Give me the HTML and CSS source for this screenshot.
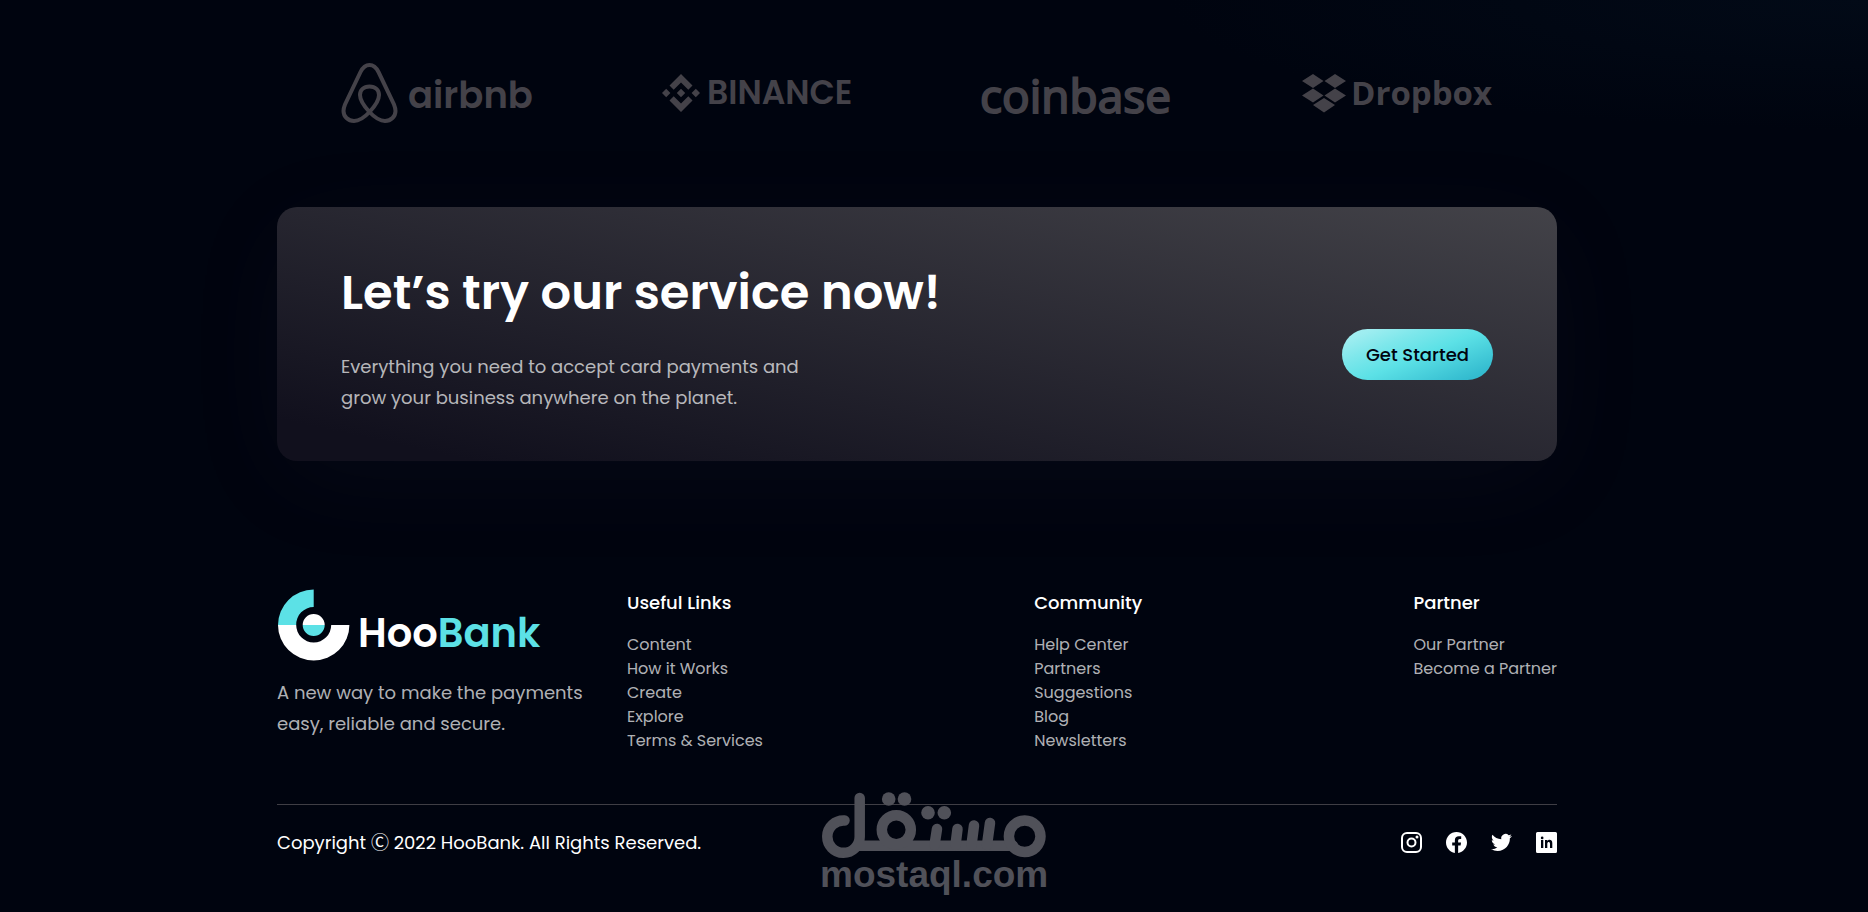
FILE: index.html
```html
<!DOCTYPE html>
<html lang="en">
<head>
<meta charset="utf-8">
<title>HooBank</title>
<meta name="viewport" content="width=device-width, initial-scale=1">
<link rel="stylesheet" href="styles.css">
</head>
<body>
<div class="page">
  <main class="container">
    <section class="clients" aria-label="Clients">
      <div class="client">
        <svg class="client-logo" viewBox="0 0 192 64" role="img" aria-label="airbnb">
          <path d="M28.500 51C21 43 19 38 19 34C19 29 22.500 25.500 28.500 25.500C34.500 25.500 38 29 38 34C38 38 36 43 28.500 51C22 58 17.500 60 13 60C7 60 2.500 55.500 2.500 50C2.500 47.500 3 46 4 43.500L19.500 11C21.500 7 24 4 28.500 4C33 4 35.500 7 37.500 11L53 43.500C54 46 54.500 47.500 54.500 50C54.500 55.500 50 60 44 60C39.500 60 35 58 28.500 51Z" fill="none" stroke="#444249" stroke-width="4"/>
          <text class="word-airbnb" x="67" y="47">airbnb</text>
        </svg>
      </div>
      <div class="client">
        <svg class="client-logo" viewBox="0 0 192 64" role="img" aria-label="BINANCE">
          <path class="mark" d="M20 13L31.500 24.500L27.300 28.800L20 21.500L12.700 28.800L8.500 24.500ZM20 51L31.500 39.500L27.300 35.200L20 42.500L12.700 35.200L8.500 39.500ZM1 32L5.200 27.800L9.400 32L5.200 36.200ZM30.600 32L34.800 27.800L39 32L34.800 36.200ZM20 27.800L24.200 32L20 36.200L15.800 32Z"/>
          <text class="word-binance" x="46" y="43">BINANCE</text>
        </svg>
      </div>
      <div class="client">
        <svg class="client-logo" viewBox="0 0 192 64" role="img" aria-label="coinbase">
          <text class="word-coinbase" x="-1" y="52">coinbase</text>
        </svg>
      </div>
      <div class="client">
        <svg class="client-logo" viewBox="0 0 192 64" role="img" aria-label="Dropbox">
          <path class="mark" d="M12 13L22.500 20L12 27L1 20ZM34 13L45 20L34 27L23.500 20ZM12 27.500L22.500 34.500L12 41.500L1 34.500ZM34 27.500L45 34.500L34 41.500L23.500 34.500ZM23 37L34 44L23 51.500L12 44Z"/>
          <text class="word-dropbox" x="50" y="44">Dropbox</text>
        </svg>
      </div>
    </section>

    <section class="cta">
      <div class="cta-copy">
        <h2 class="cta-title">Let’s try our service now!</h2>
        <p class="lead">Everything you need to accept card payments and grow your business anywhere on the planet.</p>
      </div>
      <button type="button" class="cta-button">Get Started</button>
    </section>

    <footer class="footer">
      <div class="footer-top">
        <div class="brand">
          <svg class="brand-logo" viewBox="0 0 266 72" role="img" aria-label="HooBank">
            <path fill="#5ce1e6" d="M1 36A35.700 35.500 0 0 1 36.700 0.500V18A17.500 17.500 0 0 0 19.200 36ZM25.700 36H47.700A11 11 0 0 1 25.700 36Z"/>
            <path fill="#fff" d="M1 36H19.200A17.500 17.500 0 0 0 54.200 36H72.400A35.700 35.500 0 0 1 1 36ZM25.700 36A11 11 0 0 1 47.700 36Z"/>
            <text class="word-brand" x="81" y="58">Hoo<tspan fill="#5ce1e6">Bank</tspan></text>
          </svg>
          <p class="lead">A new way to make the payments easy, reliable and secure.</p>
        </div>
        <nav class="link-columns" aria-label="Footer">
          <div class="link-column">
            <h3 class="link-title">Useful Links</h3>
            <ul class="links">
              <li><a href="#">Content</a></li>
              <li><a href="#">How it Works</a></li>
              <li><a href="#">Create</a></li>
              <li><a href="#">Explore</a></li>
              <li><a href="#">Terms &amp; Services</a></li>
            </ul>
          </div>
          <div class="link-column">
            <h3 class="link-title">Community</h3>
            <ul class="links">
              <li><a href="#">Help Center</a></li>
              <li><a href="#">Partners</a></li>
              <li><a href="#">Suggestions</a></li>
              <li><a href="#">Blog</a></li>
              <li><a href="#">Newsletters</a></li>
            </ul>
          </div>
          <div class="link-column">
            <h3 class="link-title">Partner</h3>
            <ul class="links">
              <li><a href="#">Our Partner</a></li>
              <li><a href="#">Become a Partner</a></li>
            </ul>
          </div>
        </nav>
      </div>
      <div class="footer-bottom">
        <p class="copyright">Copyright Ⓒ 2022 HooBank. All Rights Reserved.</p>
        <div class="socials">
          <a href="#" aria-label="Instagram"><svg class="social" viewBox="0 0 21 21"><rect x="1" y="1" width="19" height="19" rx="5" fill="none" stroke="#fff" stroke-width="2"/><circle cx="10.500" cy="10.500" r="4" fill="none" stroke="#fff" stroke-width="2"/><circle cx="16" cy="5" r="1.500" fill="#fff"/></svg></a>
          <a href="#" aria-label="Facebook"><svg class="social" viewBox="0 0 24 24"><path fill="#fff" d="M24 12.073c0-6.627-5.373-12-12-12s-12 5.373-12 12c0 5.990 4.388 10.954 10.125 11.854v-8.385H7.078v-3.470h3.047V9.430c0-3.007 1.792-4.669 4.533-4.669 1.312 0 2.686.235 2.686.235v2.953H15.830c-1.491 0-1.956.925-1.956 1.874v2.250h3.328l-.532 3.470h-2.796v8.385C19.612 23.027 24 18.062 24 12.073z"/></svg></a>
          <a href="#" aria-label="Twitter"><svg class="social" viewBox="0 0 24 24"><path fill="#fff" d="M23.953 4.570a10 10 0 01-2.825.775 4.958 4.958 0 002.163-2.723c-.951.555-2.005.959-3.127 1.184a4.920 4.920 0 00-8.384 4.482C7.690 8.095 4.067 6.130 1.640 3.162a4.822 4.822 0 00-.666 2.475c0 1.710.870 3.213 2.188 4.096a4.904 4.904 0 01-2.228-.616v.060a4.923 4.923 0 003.946 4.827 4.996 4.996 0 01-2.212.085 4.936 4.936 0 004.604 3.417 9.867 9.867 0 01-6.102 2.105c-.390 0-.779-.023-1.170-.067a13.995 13.995 0 007.557 2.209c9.053 0 13.998-7.496 13.998-13.985 0-.210 0-.420-.015-.630A9.935 9.935 0 0024 4.590z"/></svg></a>
          <a href="#" aria-label="LinkedIn"><svg class="social" viewBox="0 0 21 21"><path fill="#fff" fill-rule="evenodd" d="M1.500 0H19.500A1.500 1.500 0 0 1 21 1.500V19.500A1.500 1.500 0 0 1 19.500 21H1.500A1.500 1.500 0 0 1 0 19.500V1.500A1.500 1.500 0 0 1 1.500 0ZM5 8V16H7.300V8ZM6.150 4.600A1.350 1.350 0 1 0 6.150 7.300A1.350 1.350 0 1 0 6.150 4.600ZM9 8V16H11.300V11.800C11.300 9.300 14 9.300 14 11.800V16H16.300V11C16.300 7.300 12.700 7 11.300 9V8Z"/></svg></a>
        </div>
      </div>
    </footer>
  </main>
  <svg class="watermark" viewBox="0 0 226 104" role="img" aria-label="mostaql.com">
    <g fill="none" stroke="#505159" stroke-width="10.500" stroke-linecap="round" stroke-linejoin="round">
      <path d="M23.500 28.500A16.200 16.200 0 1 0 38.700 44.500V6M36 53.700H192"/>
      <circle cx="75.300" cy="37.700" r="14.500"/>
      <circle cx="203.700" cy="44.300" r="15.800"/>
      <path d="M116 37L113.500 53M136.500 37L134.500 53M153 33.500L150.500 53M169 31L166 53"/>
    </g>
    <g fill="#505159">
      <circle cx="67.700" cy="7" r="6.800"/><circle cx="83.500" cy="7" r="6.800"/>
      <circle cx="107" cy="20.700" r="6.800"/><circle cx="123.300" cy="20.700" r="6.800"/>
      <text class="word-watermark" x="-1" y="95">mostaql.com</text>
    </g>
  </svg>
</div>
</body>
</html>
```
FILE: styles.css
```css
* {
  box-sizing: border-box;
  margin: 0;
  padding: 0;
}

body {
  background: #00040f;
  color: #fff;
  font-family: Poppins, "Noto Sans CJK JP", sans-serif;
}

.page {
  position: relative;
  min-height: 100vh;
  padding: 0 34px 0 0;
  background: radial-gradient(ellipse 700px 130px at 100% 0, #020a17, #00040f);
  overflow: hidden;
}

.container {
  max-width: 1280px;
  margin: 0 auto;
}

.clients {
  display: grid;
  grid-template-columns: repeat(4, 1fr);
  padding: 61px 0 82px;
}

.client {
  display: flex;
  justify-content: center;
}

.client-logo {
  width: 192px;
  height: 64px;
  overflow: visible;
}

.client-logo text,
.mark {
  fill: #444249;
}

.word-airbnb {
  font: 600 37px Poppins, sans-serif;
}

.word-binance {
  font: 600 33px Poppins, sans-serif;
}

.word-coinbase {
  font: 500 46px "Open Sans", sans-serif;
  stroke: #444249;
  stroke-width: 2px;
}

.word-dropbox {
  font: 700 33px "Open Sans", sans-serif;
}

.cta {
  display: flex;
  align-items: center;
  padding: 48px 64px;
  border-radius: 20px;
  background: linear-gradient(-168deg, #fff -279%, #6d6d6d -78%, #11101d 92%);
  box-shadow: 0 20px 100px -10px rgba(66, 71, 91, 0.1);
}

.cta-copy {
  flex: 1;
}

.cta-title {
  font-size: 48px;
  font-weight: 600;
  line-height: 76px;
}

.lead {
  max-width: 480px;
  margin-top: 20px;
  color: rgba(255, 255, 255, 0.7);
  font-size: 18px;
  line-height: 31px;
}

.cta-button {
  margin-top: 40px;
  padding: 12px 24px;
  border: 0;
  border-radius: 26px;
  background: linear-gradient(158deg, #def9fa -43%, #bef3f5 -21%, #9dedf0 12%, #7de7eb 30%, #5ce1e6 52%, #33bbcf 90%);
  color: #00040f;
  font: inherit;
  font-size: 18px;
  font-weight: 500;
  line-height: 27px;
}

.footer {
  margin-top: 128px;
}

.footer-top {
  display: flex;
  padding-bottom: 51px;
}

.brand {
  width: 310px;
  margin-right: 40px;
}

.brand-logo {
  display: block;
  width: 266px;
  height: 72px;
  overflow: visible;
}

.word-brand {
  font: 600 40px Poppins, sans-serif;
  fill: #fff;
}

.brand .lead {
  margin-top: 16px;
}

.link-columns {
  display: flex;
  flex: 1;
  justify-content: space-between;
}

.link-title {
  font-size: 18px;
  font-weight: 500;
  line-height: 28px;
}

.links {
  margin-top: 16px;
  list-style: none;
  font-size: 16px;
  line-height: 24px;
}

.links a {
  color: rgba(255, 255, 255, 0.7);
  text-decoration: none;
}

.footer-bottom {
  display: flex;
  align-items: center;
  justify-content: space-between;
  padding: 24px 0;
  border-top: 1px solid #3f3e45;
}

.copyright {
  font-size: 18px;
  line-height: 27px;
}

.socials {
  display: flex;
  gap: 24px;
}

.social {
  display: block;
  width: 21px;
  height: 21px;
}

.watermark {
  position: absolute;
  bottom: 16px;
  left: 50%;
  width: 226px;
  height: 104px;
  margin-left: -113px;
  overflow: visible;
}

.word-watermark {
  font: 700 37px "Liberation Sans", sans-serif;
}
```
